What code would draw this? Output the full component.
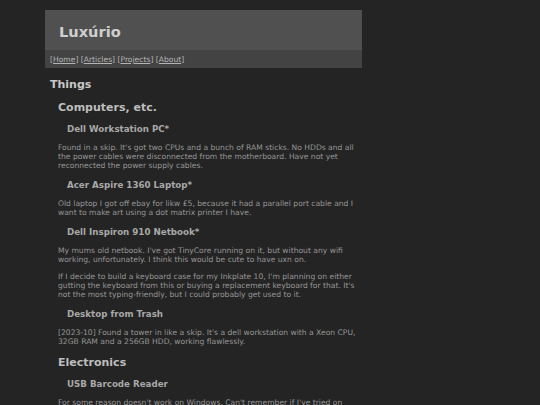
const font = { fontFamily: '"DejaVu Sans", Verdana, sans-serif' };

// ======================================
// CONTENT
// ======================================

type Block =
  | { kind: 'h3'; text: string }
  | { kind: 'h4'; text: string }
  | { kind: 'p'; text: string };

const blocks: Block[] = [
  { kind: 'h3', text: 'Computers, etc.' },
  { kind: 'h4', text: 'Dell Workstation PC*' },
  {
    kind: 'p',
    text: "Found in a skip. It's got two CPUs and a bunch of RAM sticks. No HDDs and all the power cables were disconnected from the motherboard. Have not yet reconnected the power supply cables.",
  },
  { kind: 'h4', text: 'Acer Aspire 1360 Laptop*' },
  {
    kind: 'p',
    text: 'Old laptop I got off ebay for likw £5, because it had a parallel port cable and I want to make art using a dot matrix printer I have.',
  },
  { kind: 'h4', text: 'Dell Inspiron 910 Netbook*' },
  {
    kind: 'p',
    text: "My mums old netbook. I've got TinyCore running on it, but without any wifi working, unfortunately. I think this would be cute to have uxn on.",
  },
  {
    kind: 'p',
    text: "If I decide to build a keyboard case for my Inkplate 10, I'm planning on either gutting the keyboard from this or buying a replacement keyboard for that. It's not the most typing-friendly, but I could probably get used to it.",
  },
  { kind: 'h4', text: 'Desktop from Trash' },
  {
    kind: 'p',
    text: "[2023-10] Found a tower in like a skip. It's a dell workstation with a Xeon CPU, 32GB RAM and a 256GB HDD, working flawlessly.",
  },
  { kind: 'h3', text: 'Electronics' },
  { kind: 'h4', text: 'USB Barcode Reader' },
  {
    kind: 'p',
    text: "For some reason doesn't work on Windows. Can't remember if I've tried on Linux yet, but I should give it a go at some point.",
  },
];

const links = ['Home', 'Articles', 'Projects', 'About'];

// ======================================
// COMPONENT
// ======================================

export default function App() {
  return (
    <div className="min-h-screen w-full bg-[#242424] pt-[10px] overflow-hidden" style={font}>
      <div className="ml-[45px] w-[317px]">

        {/* HEADER */}
        <header className="h-[40px] bg-[#505050] pl-[14px] pt-[13px]">
          <h1 className="text-[14.6px] leading-[18px] font-bold text-[#cfcfcf]">
            Luxúrio
          </h1>
        </header>

        {/* NAV */}
        <nav className="h-[18px] bg-[#434343] pl-[5px] pt-[5px] text-[7.6px] leading-[9.35px] text-[#b5b5b5]">
          {links.map((link, i) => (
            <span key={link}>
              {i > 0 && ' '}[<a href="#" className="underline">{link}</a>]
            </span>
          ))}
        </nav>

        {/* MAIN */}
        <main className="pl-[5px] pr-[5px]">
          <h2 className="mt-[9.5px] text-[11px] leading-[14px] font-bold text-[#c8c8c8]">
            Things
          </h2>

          {blocks.map((block, i) => {
            const prev = blocks[i - 1];

            if (block.kind === 'h3') {
              return (
                <h3 key={i} className="mt-[9px] ml-[8px] text-[11px] leading-[14px] font-bold text-[#bdbdbd]">
                  {block.text}
                </h3>
              );
            }

            if (block.kind === 'h4') {
              return (
                <h4 key={i} className="mt-[9px] ml-[17px] text-[8.7px] leading-[11px] font-bold text-[#a8a8a8]">
                  {block.text}
                </h4>
              );
            }

            return (
              <p
                key={i}
                className={`${prev && prev.kind === 'p' ? 'mt-[7.3px]' : 'mt-[8.2px]'} ml-[8px] text-[7.6px] leading-[9.35px] text-[#969696]`}
              >
                {block.text}
              </p>
            );
          })}
        </main>
      </div>
    </div>
  );
}
